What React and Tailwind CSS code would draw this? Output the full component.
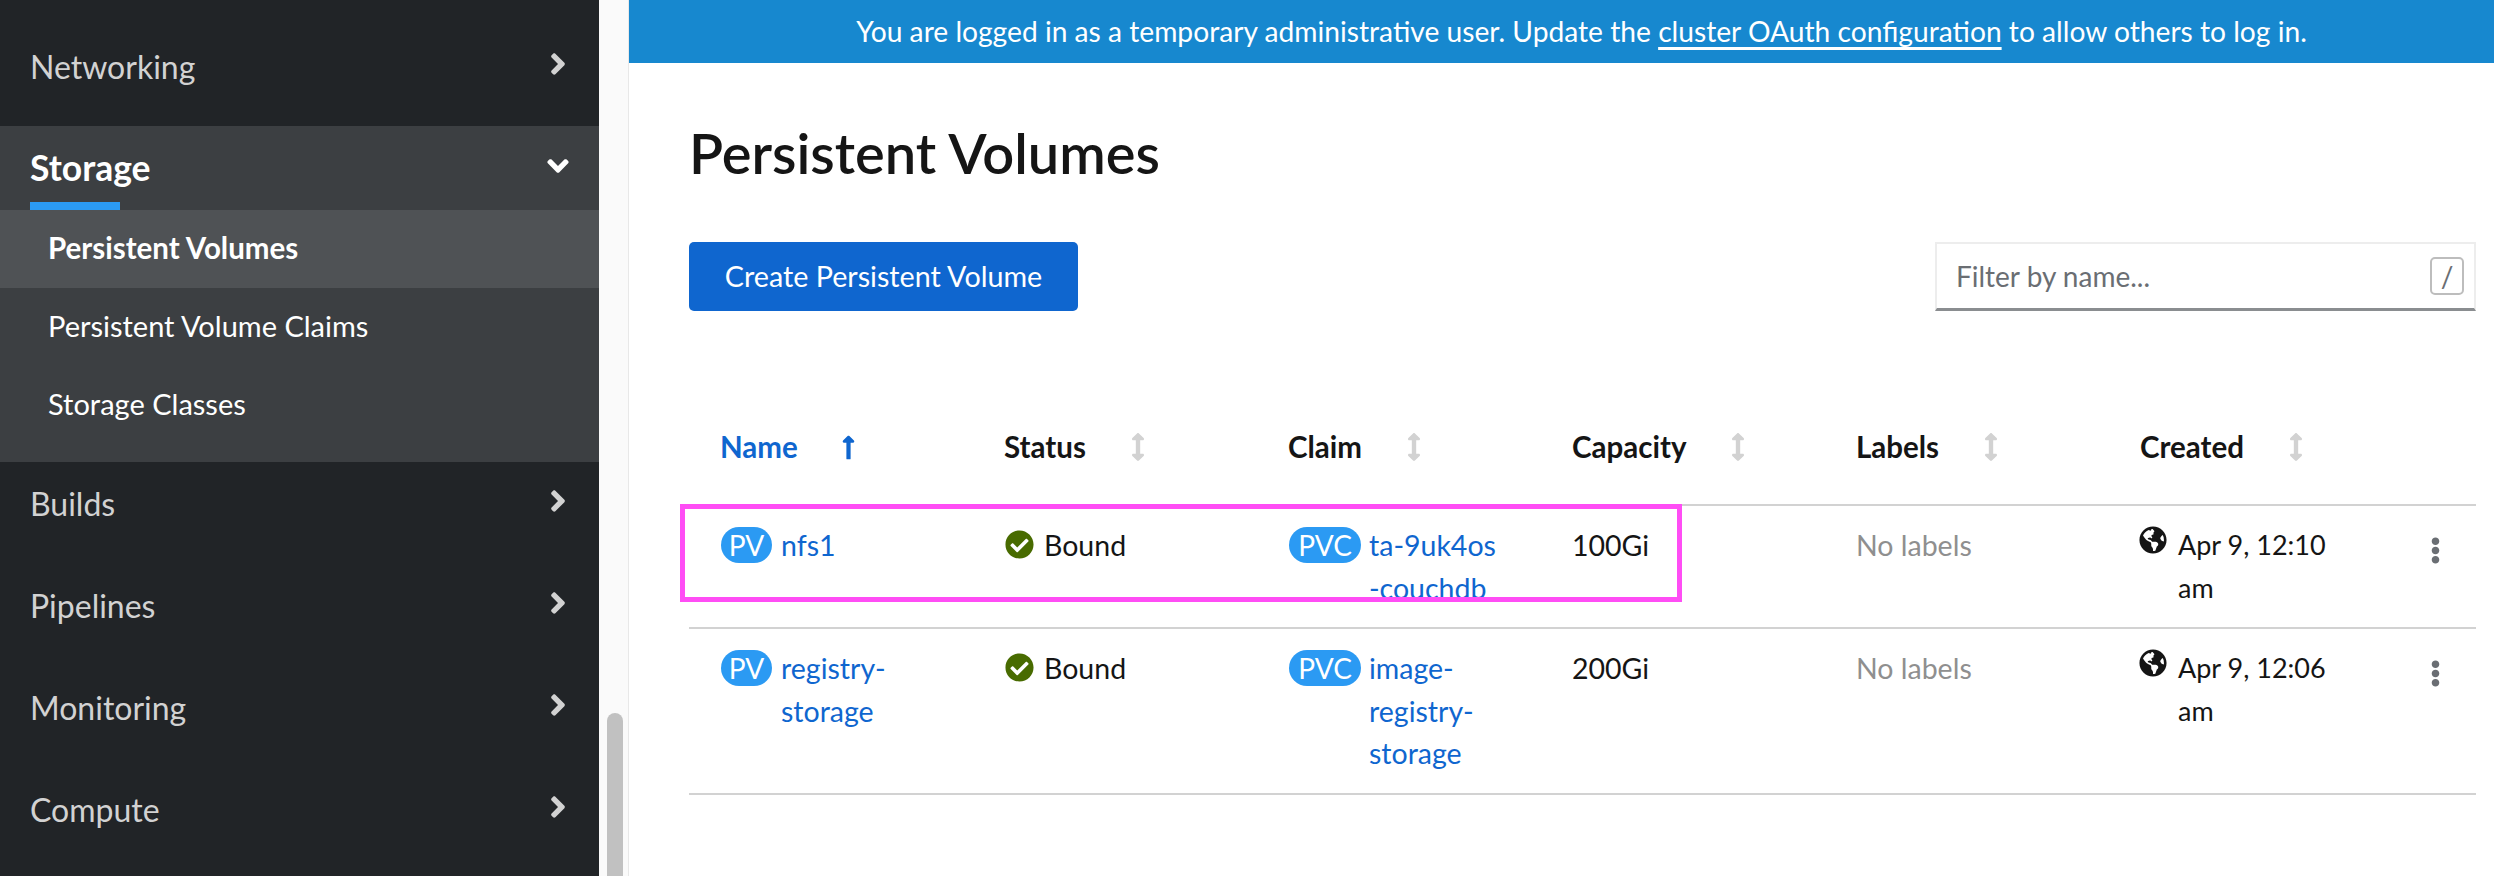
import React from "react";
import { FaAngleRight, FaAngleDown, FaArrowsAltV, FaLongArrowAltUp, FaCheckCircle, FaGlobeAmericas, FaEllipsisV } from "react-icons/fa";

const font = { fontFamily: "Lato, 'Liberation Sans', sans-serif" };

const NavItem = ({ label }) => (
  <div className="h-[84px] mb-[18px] pl-[30px] pr-[24px] flex items-center justify-between text-[32px] text-[#d2d2d2]">
    <span>{label}</span>
    <FaAngleRight className="text-[34px] -mt-[6px] text-[#d2d2d2]" />
  </div>
);

const SubItem = ({ label, active }) => (
  <div className={`h-[78px] pl-[48px] flex items-center text-white ${active ? "bg-[#4f5255] font-bold text-[29.5px]" : "text-[29px]"}`}>
    <span className="-mt-[2px]">{label}</span>
  </div>
);

const Sidebar = () => (
  <div className="w-[599px] shrink-0 bg-[#212427] pt-[25px]">
    <NavItem label="Networking" />
    <div className="bg-[#3c3f42] -mt-[1px]">
      <div className="h-[84px] pl-[30px] pr-[24px] flex items-center justify-between text-[35.5px] font-bold text-white">
        <span className="relative h-full flex items-center">
          Storage
          <span className="absolute left-0 bottom-0 w-[90px] h-[8px] bg-[#2b9af3]"></span>
        </span>
        <FaAngleDown className="text-[34px] -mt-[4px]" />
      </div>
      <SubItem label="Persistent Volumes" active />
      <SubItem label="Persistent Volume Claims" />
      <SubItem label="Storage Classes" />
      <div className="h-[18px]"></div>
    </div>
    <NavItem label="Builds" />
    <NavItem label="Pipelines" />
    <NavItem label="Monitoring" />
    <NavItem label="Compute" />
  </div>
);

const Scrollbar = () => (
  <div className="w-[30px] shrink-0 bg-[#fafafa] border-r border-[#e8e8e8] pl-[8px] pt-[713px]">
    <div className="w-[16px] h-[300px] rounded-t-lg bg-[#c1c1c1]"></div>
  </div>
);

const Badge = ({ text, width }) => (
  <span className={`${width} h-[36px] mt-[3px] shrink-0 rounded-[18px] bg-[#2b9af3] text-white text-[28px] flex items-center justify-center`}>
    {text}
  </span>
);

const Lines = ({ items }) => (
  <div>
    {items.map((l) => (
      <div key={l}>{l}</div>
    ))}
  </div>
);

const columns = ["Name", "Status", "Claim", "Capacity", "Labels", "Created"];

const HeaderCell = ({ label, active }) => (
  <div className={`pl-[31px] flex items-center font-bold text-[29.5px] ${active ? "text-[#0f66cf]" : "text-[#151515]"}`}>
    <span className="whitespace-nowrap">{label}</span>
    {active ? (
      <FaLongArrowAltUp className="text-[27px] ml-[37px]" />
    ) : (
      <FaArrowsAltV className="text-[28px] text-[#d2d2d2] ml-[38px]" />
    )}
  </div>
);

const Row = ({ name, claim, capacity, date }) => (
  <div className="grid grid-cols-[284px_284px_284px_284px_284px_284px_82px] border-b-2 border-[#d2d2d2] py-[18px] text-[28.5px] leading-[42.5px]">
    <div className="pl-[32px] flex gap-[9px] text-[#0f66cf]">
      <Badge text="PV" width="w-[51px]" />
      <Lines items={name} />
    </div>
    <div className="pl-[32px] flex items-start gap-[10px] text-[#151515]">
      <FaCheckCircle className="text-[29px] text-[#486b00] mt-[6px] shrink-0" />
      <span>Bound</span>
    </div>
    <div className="pl-[32px] flex gap-[8px] text-[#0f66cf]">
      <Badge text="PVC" width="w-[72px]" />
      <Lines items={claim} />
    </div>
    <div className="pl-[31px] text-[#151515]">{capacity}</div>
    <div className="pl-[31px] text-[#8f8f8f]">No labels</div>
    <div className="pl-[31px] flex gap-[11px] text-[#151515] text-[27px] -ml-[1px]">
      <FaGlobeAmericas className="text-[28px] mt-[2px] shrink-0" />
      <Lines items={date} />
    </div>
    <div className="flex justify-start pl-[29px] pt-[13px]">
      <FaEllipsisV className="text-[27px] text-[#6a6e73]" />
    </div>
  </div>
);

export default function App() {
  return (
    <div className="w-full h-[876px] overflow-hidden flex bg-white" style={font}>
      <Sidebar />
      <Scrollbar />
      <div className="flex-1 min-w-0">
        <div className="h-[63px] bg-[#1788cf] text-white text-[28.2px] flex items-center justify-center pl-[40px]">
          <span>
            You are logged in as a temporary administrative user. Update the{" "}
            <span className="underline decoration-[3px] underline-offset-[5px]">cluster OAuth configuration</span>{" "}
            to allow others to log in.
          </span>
        </div>
        <div className="pl-[60px] pr-[18px]">
          <h1 className="h-[179px] flex items-center text-[56px] font-semibold text-[#151515]">Persistent Volumes</h1>
          <div className="flex justify-between h-[69px]">
            <button className="w-[389px] rounded-[5px] bg-[#0f66cf] text-white text-[28.7px]">Create Persistent Volume</button>
            <div className="w-[541px] border-2 border-[#ededed] border-b-[3px] border-b-[#8a8d90] pl-[19px] pr-[10px] flex items-center justify-between text-[28px] text-[#6a6e73]">
              <span>Filter by name...</span>
              <span className="w-[34px] h-[38px] border-2 border-[#bdbdbd] rounded-[5px] flex items-center justify-center text-[28px] text-[#6a6e73]">/</span>
            </div>
          </div>
          <div className="relative">
            <div className="grid grid-cols-[284px_284px_284px_284px_284px_284px_82px] h-[195px] items-center border-b-2 border-[#d2d2d2] pt-[79px]">
              {columns.map((c, i) => (
                <HeaderCell key={c} label={c} active={i === 0} />
              ))}
            </div>
            <Row name={["nfs1"]} claim={["ta-9uk4os", "-couchdb"]} capacity="100Gi" date={["Apr 9, 12:10", "am"]} />
            <Row name={["registry-", "storage"]} claim={["image-", "registry-", "storage"]} capacity="200Gi" date={["Apr 9, 12:06", "am"]} />
            <div className="absolute left-[-9px] top-[193px] w-[1002px] h-[98px] border-[5px] border-[#ff4df5]"></div>
          </div>
        </div>
      </div>
    </div>
  );
}
